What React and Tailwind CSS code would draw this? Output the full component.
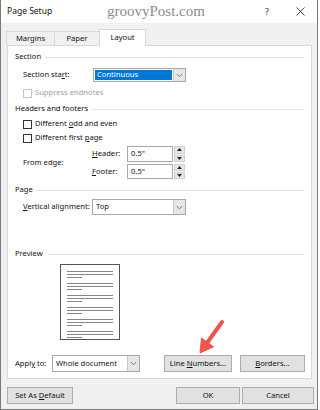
import React from 'react';

const font = { fontFamily: '"Noto Sans", "Open Sans", sans-serif' };

function Chevron() {
  return (
    <svg width="7" height="5" viewBox="0 0 7 5">
      <path d="M0.8 1 L3.5 3.8 L6.2 1" fill="none" stroke="#6d6d6d" strokeWidth="0.9" />
    </svg>
  );
}

function Select({ value, selected, className }) {
  return (
    <div className={`flex h-full border border-[#a8a8a8] bg-white ${className}`}>
      <div className="flex-1 p-[1px] flex">
        <div className={`flex-1 flex items-center pl-[2px] ${selected ? 'bg-[#0078d7] text-white' : ''}`}>{value}</div>
      </div>
      <div className="w-[12px] flex items-center justify-center bg-[#e6e6e6] border-l border-[#c8c8c8]">
        <Chevron />
      </div>
    </div>
  );
}

function Spin({ value }) {
  return (
    <div className="flex h-full w-[58px]">
      <div className="flex-1 flex items-center pl-[3px] border border-[#a8a8a8] bg-white">{value}</div>
      <div className="w-[12px] flex flex-col gap-[1px] pl-[1px]">
        <div className="flex-1 flex items-center justify-center bg-[#e6e6e6] border border-[#cfcfcf]">
          <svg width="5" height="3" viewBox="0 0 5 3"><path d="M0 3 L2.5 0 L5 3Z" fill="#222" /></svg>
        </div>
        <div className="flex-1 flex items-center justify-center bg-[#e6e6e6] border border-[#cfcfcf]">
          <svg width="5" height="3" viewBox="0 0 5 3"><path d="M0 0 L2.5 3 L5 0Z" fill="#222" /></svg>
        </div>
      </div>
    </div>
  );
}

function GroupLabel({ children, className }) {
  return (
    <div className={`flex items-center h-[12px] ml-[7px] mr-[6px] gap-[4px] ${className}`}>
      <span>{children}</span>
      <div className="flex-1 h-[1px] bg-[#e3e3e3]" />
    </div>
  );
}

function Check({ children, disabled, className }) {
  return (
    <div className={`flex items-center h-[12px] ml-[15px] gap-[3px] ${disabled ? 'text-[#a0a0a0]' : ''} ${className}`}>
      <div className={`w-[9px] h-[9px] border bg-white ${disabled ? 'border-[#c4c4c4]' : 'border-[#333]'}`} />
      <span>{children}</span>
    </div>
  );
}

function Btn({ children, className }) {
  return (
    <div className={`flex items-center justify-center h-[17px] bg-[#e1e1e1] border border-[#adadad] ${className}`}>
      <span>{children}</span>
    </div>
  );
}

const U = ({ children }) => <span className="underline underline-offset-1">{children}</span>;

export default function App() {
  const groups = [271, 283, 295, 307, 319, 331];
  return (
    <div className="w-[320px] h-[410px] bg-white relative text-[7.6px] text-[#111] leading-none" style={font}>
      <div className="w-[318px] h-[410px] bg-[#f0f0f0] border-l border-r border-b border-[#7a7a7a] flex flex-col">
        {/* Title bar */}
        <div className="h-[23px] bg-white flex items-center pl-[6px] pr-[12px]">
          <span className="text-[8.5px] flex-1">Page Setup</span>
          <span className="text-[9px] text-[#333] mr-[27px]">?</span>
          <svg width="9" height="9" viewBox="0 0 9 9">
            <path d="M0.5 0.5 L8.5 8.5 M8.5 0.5 L0.5 8.5" stroke="#333" strokeWidth="0.9" />
          </svg>
        </div>

        {/* Tabs */}
        <div className="flex h-[22px] pl-[5px] items-end">
          <div className="w-[48px] h-[15px] flex items-center justify-center border-t border-l border-[#d9d9d9] mb-[-1px]">Margins</div>
          <div className="w-[45px] h-[15px] flex items-center justify-center border-t border-l border-[#d9d9d9] mb-[-1px]">Paper</div>
          <div className="w-[47px] h-[17px] flex items-center justify-center bg-white border-t border-l border-r border-[#d9d9d9] mb-[-1px] relative z-10">Layout</div>
        </div>

        {/* Panel */}
        <div className="ml-[6px] w-[305px] h-[334px] bg-white border border-[#d9d9d9] flex flex-col">
          <GroupLabel className="mt-[5px]">Section</GroupLabel>
          <div className="mt-[5px] h-[14px] ml-[15px] flex items-center">
            <span className="w-[70px]">Section sta<U>r</U>t:</span>
            <Select value="Continuous" selected className="w-[93px]" />
          </div>
          <Check disabled className="mt-[5px]">Suppress endnotes</Check>

          <GroupLabel className="mt-[4px]">Headers and footers</GroupLabel>
          <Check className="mt-[3px]">Different <U>o</U>dd and even</Check>
          <Check className="mt-[2px]">Different first <U>p</U>age</Check>
          <div className="mt-[2px] h-[33px] ml-[15px] flex items-center">
            <span className="w-[69px]">From edge:</span>
            <div className="flex flex-col gap-[2px]">
              <div className="h-[16px] flex items-center">
                <span className="w-[35px]"><U>H</U>eader:</span>
                <Spin value={'0.5"'} />
              </div>
              <div className="h-[15px] flex items-center">
                <span className="w-[35px]"><U>F</U>ooter:</span>
                <Spin value={'0.5"'} />
              </div>
            </div>
          </div>

          <GroupLabel className="mt-[5px]">Page</GroupLabel>
          <div className="mt-[3px] h-[16px] ml-[15px] flex items-center">
            <span className="w-[69px]"><U>V</U>ertical alignment:</span>
            <Select value="Top" className="w-[94px]" />
          </div>

          <GroupLabel className="mt-[33px]">Preview</GroupLabel>
          <div className="mt-[4px] ml-[52px] w-[60px] h-[76px] border border-[#555] bg-white flex flex-col pt-[6px] pl-[6px] pr-[6px] gap-[5px]">
            {groups.map((g) => (
              <div key={g} className="flex flex-col gap-[2px]">
                <div className="h-[1px] bg-[#888]" />
                <div className="h-[1px] bg-[#888]" />
                <div className="h-[1px] w-[15px] bg-[#888]" />
              </div>
            ))}
          </div>

          <div className="mt-[15px] h-[17px] ml-[7px] flex items-center">
            <span className="w-[37px]">Appl<U>y</U> to:</span>
            <Select value="Whole document" className="w-[88px]" />
            <Btn className="ml-[24px] w-[68px]">Line <U>N</U>umbers...</Btn>
            <Btn className="ml-[8px] w-[65px]"><U>B</U>orders...</Btn>
          </div>
        </div>

        {/* Bottom buttons */}
        <div className="mt-[8px] flex items-center pl-[6px]">
          <Btn className="w-[66px]">Set As <U>D</U>efault</Btn>
          <Btn className="ml-[103px] w-[64px] border-[#0078d7]">OK</Btn>
          <Btn className="ml-[2px] w-[72px]">Cancel</Btn>
        </div>
      </div>

      {/* watermark */}
      <div className="absolute left-[107px] top-[4px] text-[15px] text-[#8c8c8c]" style={{ fontFamily: '"Liberation Serif", serif' }}>
        groovyPost.com
      </div>

      {/* red arrow */}
      <svg className="absolute left-0 top-0 pointer-events-none" width="320" height="410" viewBox="0 0 320 410">
        <path d="M222 322 L207 343" stroke="#f0554a" strokeWidth="4" strokeLinecap="round" />
        <path d="M200 353 L213.5 346.8 L201.5 338Z" fill="#f0554a" stroke="#f0554a" strokeWidth="1" strokeLinejoin="round" />
      </svg>
    </div>
  );
}
